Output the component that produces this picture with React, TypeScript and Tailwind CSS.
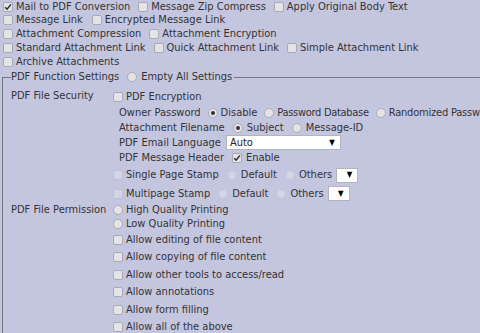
import React from "react";

type CtlProps = { checked?: boolean; disabled?: boolean; className?: string };

function Cb({ checked, disabled, className = "" }: CtlProps) {
  return (
    <span
      className={
        "relative inline-flex items-center justify-center w-[10px] h-[10px] shrink-0 rounded-[2px] border " +
        (disabled ? "bg-[#d3d5e6] border-[#bdbfd3] " : "bg-[#e4e4e6] border-[#a9aab3] ") +
        className
      }
    >
      {checked && (
        <svg width="8" height="8" viewBox="0 0 8 8" className="block">
          <path d="M1.2 4.2 L3.1 6.2 L6.9 1.4" fill="none" stroke="#2a2a2a" strokeWidth="1.5" />
        </svg>
      )}
    </span>
  );
}

function Rd({ checked, disabled, className = "" }: CtlProps) {
  return (
    <span
      className={
        "relative inline-flex items-center justify-center w-[10px] h-[10px] shrink-0 rounded-full border " +
        (disabled ? "bg-[#d3d5e6] border-[#c2c4d6] " : "bg-[#e4e4e6] border-[#abacb5] ") +
        className
      }
    >
      {checked && <span className="block w-[4px] h-[4px] rounded-full bg-[#333]" />}
    </span>
  );
}

function MiniSelect({ className = "" }: { className?: string }) {
  return (
    <span
      className={
        "inline-flex items-center justify-end w-[22px] h-[15px] bg-white border border-[#b4b4bc] pr-[5px] text-[8px] leading-none text-black " +
        className
      }
    >
      ▼
    </span>
  );
}

export default function App() {
  return (
    <div className="w-[480px] h-[333px] overflow-hidden bg-[#c4c6e0] text-[#333] text-[11px] leading-[14px] font-['DejaVu_Sans_Condensed','DejaVu_Sans',sans-serif] whitespace-nowrap">
      {/* top option rows */}
      <div className="flex items-center h-[13px]">
        <Cb checked className="ml-[3px] mr-[3px]" />
        <span>Mail to PDF Conversion</span>
        <Cb className="ml-[8px] mr-[3px]" />
        <span>Message Zip Compress</span>
        <Cb className="ml-[8px] mr-[3px]" />
        <span>Apply Original Body Text</span>
      </div>
      <div className="flex items-center h-[14px]">
        <Cb className="ml-[3px] mr-[3px]" />
        <span>Message Link</span>
        <Cb className="ml-[9px] mr-[3px]" />
        <span>Encrypted Message Link</span>
      </div>
      <div className="flex items-center h-[14px]">
        <Cb className="ml-[3px] mr-[3px]" />
        <span>Attachment Compression</span>
        <Cb className="ml-[8px] mr-[3px]" />
        <span>Attachment Encryption</span>
      </div>
      <div className="flex items-center h-[14px]">
        <Cb className="ml-[3px] mr-[3px]" />
        <span>Standard Attachment Link</span>
        <Cb className="ml-[8px] mr-[3px]" />
        <span>Quick Attachment Link</span>
        <Cb className="ml-[8px] mr-[3px]" />
        <span>Simple Attachment Link</span>
      </div>
      <div className="flex items-center h-[14px]">
        <Cb className="ml-[3px] mr-[3px]" />
        <span>Archive Attachments</span>
      </div>

      {/* fieldset */}
      <fieldset className="ml-[2px] mt-[1px] w-[620px] border border-[#77777f] pl-[8px] pt-[4px] pb-[10px]">
        <legend className="pr-[2px] h-[14px]">
          <span className="flex items-center h-[14px]">
            <span>PDF Function Settings</span>
            <Rd className="ml-[8px] mr-[4px]" />
            <span>Empty All Settings</span>
          </span>
        </legend>

        <div className="grid grid-cols-[102px_1fr]">
          {/* PDF File Security */}
          <div className="h-[15px] flex items-center">PDF File Security</div>
          <div className="flex flex-col">
            <div className="flex items-center h-[17px]">
              <Cb className="mr-[3px]" />
              <span>PDF Encryption</span>
            </div>
            <div className="flex items-center h-[15px] pl-[6px]">
              <span>Owner Password</span>
              <Rd checked className="ml-[7px] mr-[3px]" />
              <span>Disable</span>
              <Rd className="ml-[7px] mr-[3px]" />
              <span className="tracking-[-0.3px]">Password Database</span>
              <Rd className="ml-[7px] mr-[3px]" />
              <span className="tracking-[-0.2px]">Randomized Password</span>
            </div>
            <div className="flex items-center h-[15px] pl-[6px]">
              <span>Attachment Filename</span>
              <Rd checked className="ml-[8px] mr-[4px]" />
              <span>Subject</span>
              <Rd className="ml-[8px] mr-[4px]" />
              <span>Message-ID</span>
            </div>
            <div className="flex items-center h-[15px] pl-[6px]">
              <span>PDF Email Language</span>
              <span className="ml-[5px] flex items-center justify-between w-[115px] h-[15px] bg-white border border-[#b4b4bc] pl-[3px] pr-[5px]">
                <span className="text-[#222]">Auto</span>
                <span className="text-[8px] leading-none text-black">▼</span>
              </span>
            </div>
            <div className="flex items-center h-[15px] pl-[6px]">
              <span>PDF Message Header</span>
              <Cb checked className="ml-[8px] mr-[4px]" />
              <span>Enable</span>
            </div>
            <div className="flex items-center h-[20px]">
              <Cb disabled className="mr-[3px]" />
              <span>Single Page Stamp</span>
              <Rd disabled className="ml-[8px] mr-[4px]" />
              <span>Default</span>
              <Rd disabled className="ml-[8px] mr-[4px]" />
              <span>Others</span>
              <MiniSelect className="ml-[4px]" />
            </div>
            <div className="flex items-center h-[17px]">
              <Cb disabled className="mr-[3px]" />
              <span>Multipage Stamp</span>
              <Rd disabled className="ml-[8px] mr-[4px]" />
              <span>Default</span>
              <Rd disabled className="ml-[8px] mr-[4px]" />
              <span>Others</span>
              <MiniSelect className="ml-[4px]" />
            </div>
          </div>

          {/* PDF File Permission */}
          <div className="h-[15px] flex items-center">PDF File Permission</div>
          <div className="flex flex-col">
            <div className="flex items-center h-[15px]">
              <Rd className="mr-[3px]" />
              <span>High Quality Printing</span>
            </div>
            <div className="flex items-center h-[14px]">
              <Rd className="mr-[3px]" />
              <span>Low Quality Printing</span>
            </div>
            <div className="flex items-center h-[17.5px]">
              <Cb className="mr-[3px]" />
              <span>Allow editing of file content</span>
            </div>
            <div className="flex items-center h-[17.5px]">
              <Cb className="mr-[3px]" />
              <span>Allow copying of file content</span>
            </div>
            <div className="flex items-center h-[17.5px]">
              <Cb className="mr-[3px]" />
              <span>Allow other tools to access/read</span>
            </div>
            <div className="flex items-center h-[17.5px]">
              <Cb className="mr-[3px]" />
              <span>Allow annotations</span>
            </div>
            <div className="flex items-center h-[17.5px]">
              <Cb className="mr-[3px]" />
              <span>Allow form filling</span>
            </div>
            <div className="flex items-center h-[17.5px]">
              <Cb className="mr-[3px]" />
              <span>Allow all of the above</span>
            </div>
          </div>
        </div>
      </fieldset>
    </div>
  );
}
